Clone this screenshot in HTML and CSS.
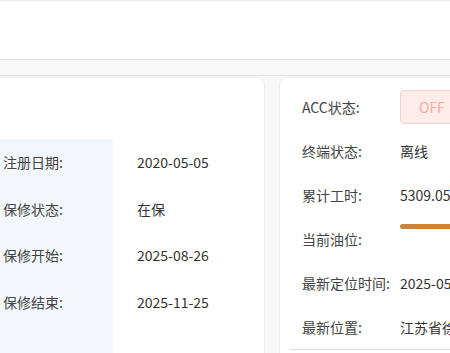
FILE: index.html
```html
<!DOCTYPE html>
<html>
<head>
    <meta charset="utf-8">
    <link rel="stylesheet" href="styles.css">
</head>
<body>
    <div class="top-area"></div>
    <div class="tab-bar"></div>

    <div class="content">
        <div class="card info-card">
            <div class="card-space"></div>
            <div class="info-table">
                <div class="info-row">
                    <div class="info-label">注册日期:</div>
                    <div class="info-value">2020-05-05</div>
                </div>
                <div class="info-row">
                    <div class="info-label">保修状态:</div>
                    <div class="info-value">在保</div>
                </div>
                <div class="info-row">
                    <div class="info-label">保修开始:</div>
                    <div class="info-value">2025-08-26</div>
                </div>
                <div class="info-row">
                    <div class="info-label">保修结束:</div>
                    <div class="info-value">2025-11-25</div>
                </div>
                <div class="info-row">
                    <div class="info-label"></div>
                    <div class="info-value"></div>
                </div>
            </div>
        </div>

        <div class="card status-card">
            <div class="status-row">
                <div class="status-label">ACC状态:</div>
                <div class="status-value"><span class="off-tag">OFF</span></div>
            </div>
            <div class="status-row">
                <div class="status-label">终端状态:</div>
                <div class="status-value">离线</div>
            </div>
            <div class="status-row">
                <div class="status-label">累计工时:</div>
                <div class="status-value">5309.05小时</div>
            </div>
            <div class="status-row">
                <div class="status-label">当前油位:</div>
                <div class="status-value">
                    <div class="oil-bar"><div class="oil-fill" style="width: 62%"></div></div>
                </div>
            </div>
            <div class="status-row">
                <div class="status-label">最新定位时间:</div>
                <div class="status-value">2025-05-20 14:32:10</div>
            </div>
            <div class="status-row">
                <div class="status-label">最新位置:</div>
                <div class="status-value">江苏省徐州市经济技术开发区</div>
            </div>
            <div class="status-divider"></div>
        </div>
    </div>

    <!-- 水印 -->
    <div class="watermark wm-1">-gl127&amp;&amp;侍相连</div>
    <div class="watermark wm-2">徐</div>
    <div class="watermark wm-3">沿</div>
    <div class="watermark wm-4">— 1 生1</div>
</body>
</html>
```

FILE: styles.css
```css
body {
    margin: 0;
    width: 450px;
    height: 353px;
    overflow: hidden;
    background: #f7f7f7;
    font-family: "Noto Sans CJK SC", "Noto Sans", sans-serif;
    font-size: 14px;
    color: #333;
    position: relative;
}

.top-area {
    height: 58px;
    background: #fff;
    border-top: 1px solid #ebebeb;
}

.tab-bar {
    height: 15px;
    background: #f8f8f8;
    border-top: 1px solid #e2e2e2;
    border-bottom: 1px solid #e2e2e2;
}

.content {
    display: flex;
    gap: 14px;
    padding-top: 1px;
    margin-left: -14px;
}

.card {
    background: #fff;
    border: 1px solid #ededed;
    border-radius: 8px;
    flex-shrink: 0;
}

.info-card {
    width: 277px;
}

.card-space {
    height: 61px;
}

.info-row {
    display: flex;
    height: 46.5px;
}

.info-label {
    width: 110px;
    padding-left: 16px;
    background: #f3f7fb;
    color: #444;
    display: flex;
    align-items: center;
}

.info-value {
    padding-left: 24px;
    display: flex;
    align-items: center;
}

.status-card {
    width: 320px;
    padding: 7px 10px 0;
}

.status-row {
    display: flex;
    height: 44px;
    align-items: center;
    padding-left: 12px;
}

.status-label {
    width: 98px;
    flex-shrink: 0;
    color: #444;
}

.status-value {
    white-space: nowrap;
    flex: 1;
}

.off-tag {
    display: inline-block;
    width: 62px;
    height: 32px;
    line-height: 32px;
    padding-left: 18px;
    background: #fdecea;
    border: 1px solid #f8cfca;
    border-radius: 4px;
    color: #f3aba4;
}

.oil-bar {
    height: 5px;
    margin-top: -15px;
    border-radius: 3px;
    background: #f2f2f2;
}

.oil-fill {
    height: 100%;
    min-width: 200px;
    border-radius: 3px;
    background: #c8843f;
}

.status-divider {
    border-top: 1px solid #dcdcdc;
}

.watermark {
    position: absolute;
    font-family: "Liberation Serif", "Noto Sans CJK SC", serif;
    color: rgba(0, 0, 0, 0.025);
    pointer-events: none;
    white-space: nowrap;
}

.wm-1 {
    left: -2px;
    top: 8px;
    font-size: 34px;
    transform: rotate(-10deg);
    transform-origin: left bottom;
}

.wm-2 {
    left: 416px;
    top: -4px;
    font-size: 30px;
    transform: rotate(-10deg);
}

.wm-3 {
    left: 414px;
    top: 56px;
    font-size: 24px;
    transform: rotate(-10deg);
}

.wm-4 {
    left: 70px;
    top: 330px;
    font-size: 28px;
    transform: rotate(-10deg);
}
```
